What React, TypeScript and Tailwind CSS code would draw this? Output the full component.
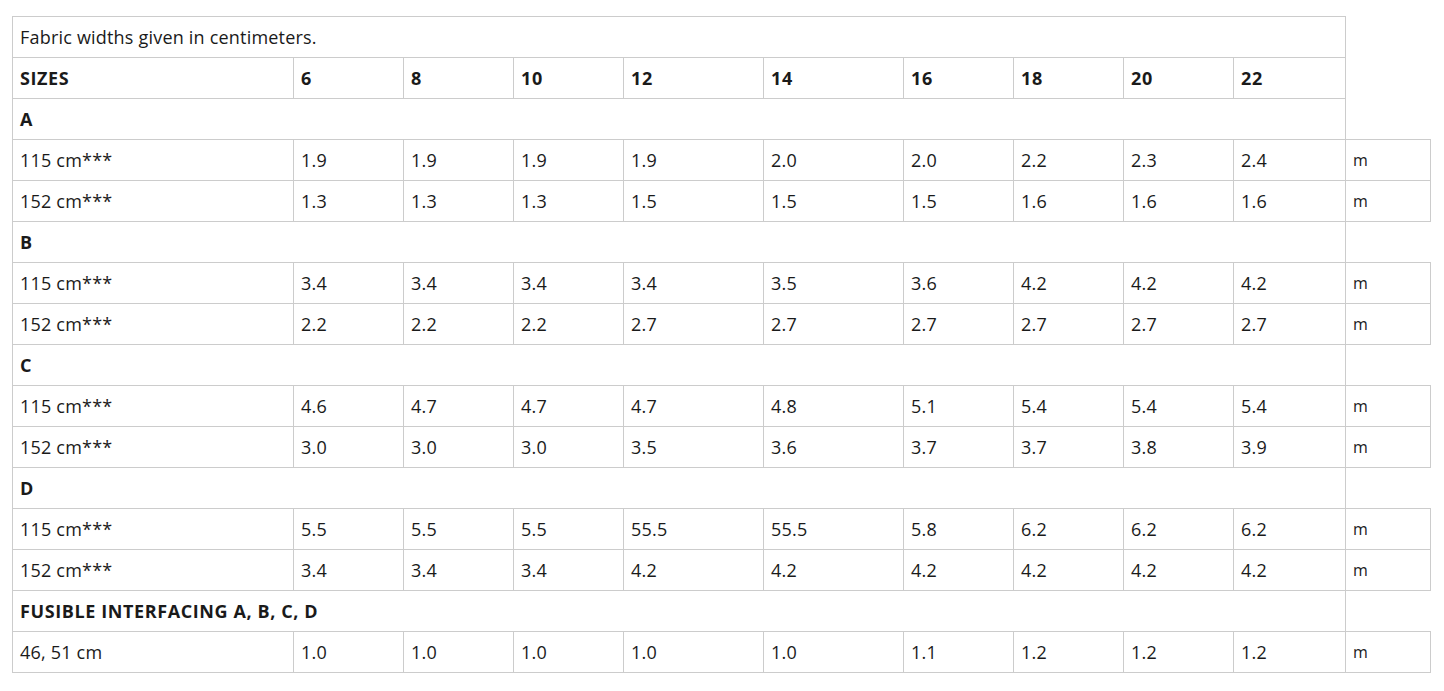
import React from "react";

const widths = [281, 110, 110, 110, 140, 140, 110, 110, 110, 112, 85];
const sizes = ["6", "8", "10", "12", "14", "16", "18", "20", "22"];

type Row = { label: string; vals: string[] };
const sections: { title: string; rows: Row[] }[] = [
  {
    title: "A",
    rows: [
      { label: "115 cm***", vals: ["1.9", "1.9", "1.9", "1.9", "2.0", "2.0", "2.2", "2.3", "2.4"] },
      { label: "152 cm***", vals: ["1.3", "1.3", "1.3", "1.5", "1.5", "1.5", "1.6", "1.6", "1.6"] },
    ],
  },
  {
    title: "B",
    rows: [
      { label: "115 cm***", vals: ["3.4", "3.4", "3.4", "3.4", "3.5", "3.6", "4.2", "4.2", "4.2"] },
      { label: "152 cm***", vals: ["2.2", "2.2", "2.2", "2.7", "2.7", "2.7", "2.7", "2.7", "2.7"] },
    ],
  },
  {
    title: "C",
    rows: [
      { label: "115 cm***", vals: ["4.6", "4.7", "4.7", "4.7", "4.8", "5.1", "5.4", "5.4", "5.4"] },
      { label: "152 cm***", vals: ["3.0", "3.0", "3.0", "3.5", "3.6", "3.7", "3.7", "3.8", "3.9"] },
    ],
  },
  {
    title: "D",
    rows: [
      { label: "115 cm***", vals: ["5.5", "5.5", "5.5", "55.5", "55.5", "5.8", "6.2", "6.2", "6.2"] },
      { label: "152 cm***", vals: ["3.4", "3.4", "3.4", "4.2", "4.2", "4.2", "4.2", "4.2", "4.2"] },
    ],
  },
  {
    title: "FUSIBLE INTERFACING A, B, C, D",
    rows: [{ label: "46, 51 cm", vals: ["1.0", "1.0", "1.0", "1.0", "1.0", "1.1", "1.2", "1.2", "1.2"] }],
  },
];

const cell = "border border-[#cccccc] h-[41px] px-[7px] py-0 align-middle text-left";
const head = "font-bold tracking-[0.6px]";

export default function App() {
  return (
    <div className="bg-white w-[1444px] h-[691px] pt-[16px] pl-[12px] text-[#1a1a1a] text-[18px] tracking-[0.2px]" style={{ fontFamily: "'Open Sans', 'Noto Sans', sans-serif" }}>
      <table className="table-fixed border-collapse w-[1419px]">
        <colgroup>
          {widths.map((w, i) => (
            <col key={i} style={{ width: w }} />
          ))}
        </colgroup>
        <tbody>
          <tr>
            <td colSpan={10} className={cell}>Fabric widths given in centimeters.</td>
          </tr>
          <tr>
            <td className={`${cell} ${head}`}>SIZES</td>
            {sizes.map((s) => (
              <td key={s} className={`${cell} ${head}`}>{s}</td>
            ))}
          </tr>
          {sections.map((sec) => (
            <React.Fragment key={sec.title}>
              <tr>
                <td colSpan={10} className={`${cell} ${head}`}>{sec.title}</td>
              </tr>
              {sec.rows.map((r, i) => (
                <tr key={i}>
                  <td className={cell}>{r.label}</td>
                  {r.vals.map((v, j) => (
                    <td key={j} className={cell}>{v}</td>
                  ))}
                  <td className={`${cell} text-[16px]`}>m</td>
                </tr>
              ))}
            </React.Fragment>
          ))}
        </tbody>
      </table>
    </div>
  );
}
